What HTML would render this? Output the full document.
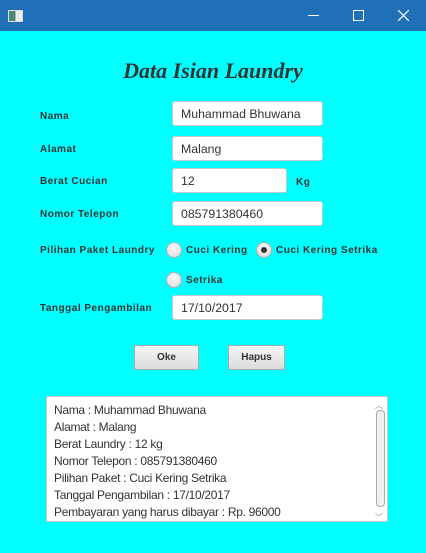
<!DOCTYPE html>
<html><head><style>
body{margin:0;width:426px;height:553px;background:#00ffff;position:relative;overflow:hidden;font-family:"Liberation Sans",sans-serif}
.tb{position:absolute;left:0;top:0;width:426px;height:31px;background:#1f70b7}
.a{position:absolute}
.l{position:absolute;left:40px;font-size:10px;font-weight:bold;color:#333;letter-spacing:0.5px}
.f{position:absolute;left:172px;background:#fff;border:1px solid #c8c8c8;border-radius:3px;height:25px;box-sizing:border-box;font-size:12.3px;color:#333;padding:5px 0 0 8px}
.r{position:absolute;width:14px;height:14px;border-radius:50%;border:1px solid #b0b0b0;background:radial-gradient(circle at 50% 35%,#fafafa,#d8d8d8)}
.b{position:absolute;top:345px;height:25px;box-sizing:border-box;border:1px solid #aaa;border-radius:2px;background:linear-gradient(#f6f6f6,#dcdcdc);font-size:10px;font-weight:bold;color:#333;text-align:center;line-height:24px}
.ta{position:absolute;left:46px;top:396px;width:342px;height:126px;box-sizing:border-box;background:#fff;border:1px solid #c8c8c8;border-radius:2px;font-size:12px;color:#333;padding:5px 0 0 7px;line-height:17px;letter-spacing:-0.3px}
</style></head><body>
<div class="tb">
<div class="a" style="left:8px;top:10px;width:13px;height:10px;border:1px solid #ddd;background:linear-gradient(90deg,#4a8a7a 50%,#e8eee8 50%)"></div>
<div class="a" style="left:308px;top:15px;width:11px;height:1px;background:#fff"></div>
<div class="a" style="left:353px;top:10px;width:9px;height:9px;border:1px solid #fff"></div>
<svg class="a" style="left:398px;top:10px" width="11" height="11"><path d="M0 0L11 11M11 0L0 11" stroke="#fff" stroke-width="1.2"/></svg>
</div>
<div class="a" style="left:0;width:426px;top:58px;text-align:center;font-family:'Liberation Serif',serif;font-style:italic;font-weight:bold;font-size:22px;color:#333">Data Isian Laundry</div>
<div class="l" style="top:111px">Nama</div>
<div class="f" style="top:101px;width:151px">Muhammad Bhuwana</div>
<div class="l" style="top:144px">Alamat</div>
<div class="f" style="top:136px;width:151px">Malang</div>
<div class="l" style="top:176px">Berat Cucian</div>
<div class="f" style="top:168px;width:115px">12</div>
<div class="l" style="left:296px;top:177px">Kg</div>
<div class="l" style="top:209px">Nomor Telepon</div>
<div class="f" style="top:201px;width:151px">085791380460</div>
<div class="l" style="top:245px">Pilihan Paket Laundry</div>
<div class="r" style="left:166px;top:242px"></div>
<div class="l" style="left:186px;top:245px">Cuci Kering</div>
<div class="r" style="left:256px;top:242px"></div>
<div class="a" style="left:261px;top:247px;width:6px;height:6px;border-radius:50%;background:#333"></div>
<div class="l" style="left:276px;top:245px">Cuci Kering Setrika</div>
<div class="r" style="left:166px;top:272px"></div>
<div class="l" style="left:186px;top:275px">Setrika</div>
<div class="l" style="top:303px">Tanggal Pengambilan</div>
<div class="f" style="top:295px;width:151px">17/10/2017</div>
<div class="b" style="left:134px;width:65px">Oke</div>
<div class="b" style="left:228px;width:57px">Hapus</div>
<div class="ta">Nama : Muhammad Bhuwana<br>Alamat : Malang<br>Berat Laundry : 12 kg<br>Nomor Telepon : 085791380460<br>Pilihan Paket : Cuci Kering Setrika<br>Tanggal Pengambilan : 17/10/2017<br>Pembayaran yang harus dibayar : Rp. 96000
<div class="a" style="left:329px;top:13px;width:7px;height:95px;border:1px solid #aaa;border-radius:4px;background:#f0f0f0"></div>
<div class="a" style="left:328px;top:0px;font-size:8px;color:#888">︿</div>
<div class="a" style="left:328px;top:112px;font-size:8px;color:#888">﹀</div>
</div>
</body></html>
